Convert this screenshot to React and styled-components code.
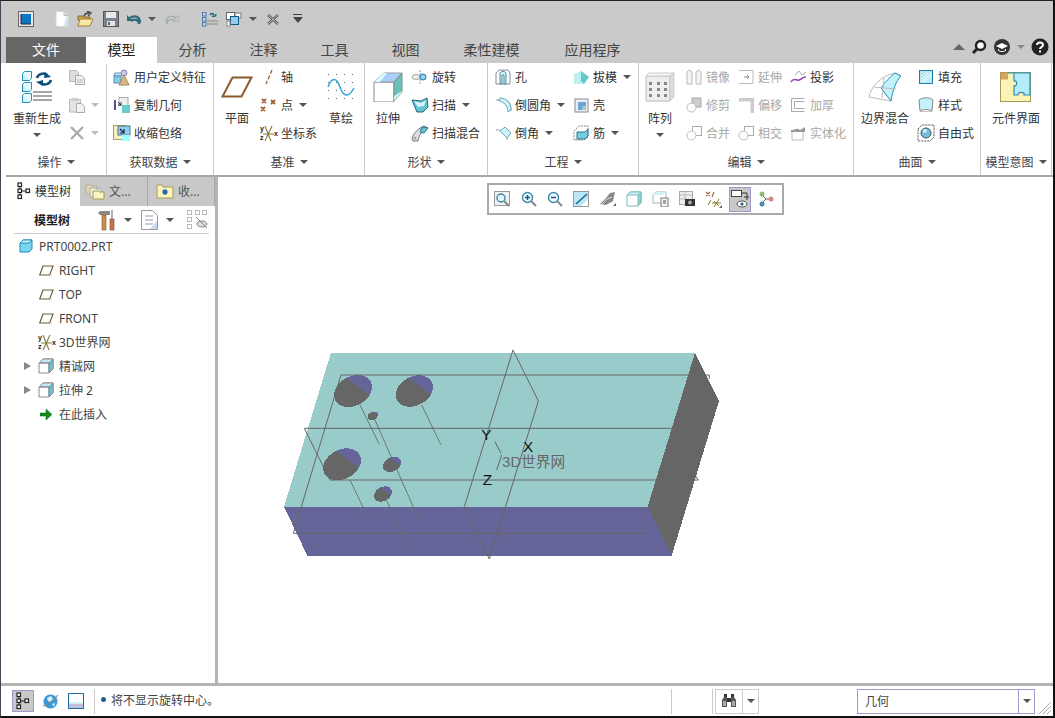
import React from "react";
import styled, { createGlobalStyle } from "styled-components";

const Global = createGlobalStyle`
  html, body { margin: 0; padding: 0; background: #fff; }
  * { box-sizing: border-box; }
  body { font-family: "Noto Sans", "Noto Sans CJK SC", sans-serif; font-size: 12px; color: #333; }
`;
const Frame = styled.div`
  width: 1055px; height: 718px; display: flex; flex-direction: column; background: #fff;
  border-top: 1px solid #222; border-left: 1px solid #445; border-right: 2px solid #111; border-bottom: 2px solid #111;
  overflow: hidden;
`;
const TitleBar = styled.div`height: 36px; background: #cacaca; display: flex; align-items: center; padding-left: 17px;`;
const Quick = styled.span`display: flex; margin-left: ${p => p.$gap ?? 0}px;`;
const TabBar = styled.div`height: 26px; background: #cacaca; display: flex; padding-left: 5px; align-items: stretch;`;
const FileTab = styled.div`width: 80px; background: #666; color: #fff; font-size: 14px; display: flex; align-items: center; justify-content: center; padding-bottom: 3px;`;
const Tab = styled.div`
  padding: 0 ${p => p.$pad ?? 21.5}px 3px; font-size: 14px; display: flex; align-items: center; color: ${p => (p.$active ? "#222" : "#444")};
  background: ${p => (p.$active ? "#fff" : "transparent")}; height: ${p => (p.$active ? 27 : 26)}px; z-index: 1;
`;
const TabTools = styled.div`margin-left: auto; display: flex; align-items: center; gap: 6px; padding: 0 4px 6px 0;`;
const Ribbon = styled.div`height: 112px; display: flex; padding-left: 5px; background: #fff;`;
const Group = styled.div`width: ${p => p.$w}px; border-right: 1px solid #c8c8c8; display: flex; flex-direction: column;`;
const GroupBody = styled.div`height: 84px; flex: none; display: flex; padding-left: ${p => p.$pad ?? 0}px;`;
const GroupLabel = styled.div`flex: 1; display: flex; align-items: center; justify-content: center; gap: 5px; color: #444; padding-top: 2px;`;
const Large = styled.div`
  width: ${p => p.$w}px; margin-right: ${p => p.$mr ?? 0}px; display: flex; flex-direction: column; align-items: center; padding-top: 5px; flex: none;
  color: #333;
`;
const LargeIcon = styled.div`height: 38px; flex: none; display: flex; align-items: center; justify-content: center;`;
const LargeText = styled.div`height: 16px; line-height: 16px; margin-top: 5px; white-space: nowrap; flex: none;`;
const LargeCaret = styled.div`margin-top: 6px; height: 4px; display: flex; flex: none;`;
const Stack = styled.div`width: ${p => p.$w}px; flex: none; display: grid; grid-auto-rows: 28px;`;
const Item = styled.div`
  display: flex; align-items: center; gap: 3px; white-space: nowrap; color: ${p => (p.$off ? "#a8a8a8" : "#333")};
`;
const ItemIcon = styled.span`width: 18px; height: 18px; display: flex; align-items: center; justify-content: center; flex: none;`;
const Caret = styled.span`
  display: inline-block; width: 0; height: 0; flex: none; margin-left: ${p => p.$ml ?? 0}px;
  border-left: 4px solid transparent; border-right: 4px solid transparent; border-top: 4px solid ${p => p.$c ?? "#555"};
`;
const Main = styled.div`height: 508px; display: flex; border-top: 2px solid #a8a8a8; margin-left: 5px;`;
const Panel = styled.div`width: 209px; flex: none; display: flex; flex-direction: column;`;
const Sash = styled.div`width: 3px; background: #b4b4b4; flex: none;`;
const PanelTabs = styled.div`height: 29px; display: flex; background: #fff; flex: none;`;
const PanelTab = styled.div`
  width: ${p => p.$w}px; display: flex; align-items: center; gap: 4px; padding: 0 0 1px ${p => p.$pl ?? 8}px; color: ${p => (p.$active ? "#333" : "#555")};
  background: ${p => (p.$active ? "#fff" : "#c8c8c8")};
  border-right: 1px solid ${p => (p.$active ? "#c8c8c8" : "#a8a8a8")};
`;
const TreeBar = styled.div`
  height: 28px; margin: 0 6px 0 8px; border-bottom: 1px solid #ccc; display: flex; align-items: center; padding-left: 20px; flex: none;
`;
const TreeBarTitle = styled.b`width: 63px; font-weight: 700; color: #222;`;
const TreeTool = styled.span`display: flex; align-items: center; margin-right: ${p => p.$mr ?? 0}px;`;
const Tree = styled.div`display: flex; flex-direction: column;`;
const TreeRow = styled.div`height: 24px; display: flex; align-items: center; padding-left: ${p => p.$pl}px; color: #444; white-space: nowrap;`;
const Expand = styled.span`
  width: 0; height: 0; margin-right: 7px; flex: none;
  border-top: 4.5px solid transparent; border-bottom: 4.5px solid transparent; border-left: 7px solid #888;
`;
const TreeIcon = styled.span`width: ${p => p.$w ?? 16}px; display: flex; justify-content: center; margin-right: ${p => p.$mr ?? 5}px; flex: none;`;
const Canvas = styled.div`flex: 1; display: flex; flex-direction: column; align-items: flex-start; padding-left: 57px; background: #fff;`;
const Float = styled.div`
  margin: 6px 0 0 212px; width: 297px; height: 32px; border: 2px solid #aaa; background: #fff; display: flex; align-items: center; flex: none;
`;
const FloatBtn = styled.span`
  width: ${p => (p.$on ? 22 : 26.4)}px; height: ${p => (p.$on ? 25 : 24)}px; margin: 0 ${p => (p.$on ? 2.2 : 0)}px; display: flex; align-items: center; justify-content: center; flex: none;
  ${p => p.$on && "background:#c8c8c8; outline: 1px solid #9c9ccc; outline-offset: -1px;"}
`;
const Model = styled.svg`display: block; margin-top: 125px; flex: none;`;
const Status = styled.div`flex: 1; border-top: 3px solid #b4b4b4; display: flex; align-items: center; padding-left: 11px; background: #fff; position: relative;`;
const StatusBtn = styled.span`
  width: 22px; height: 22px; display: flex; align-items: center; justify-content: center; margin-right: ${p => p.$mr ?? 4}px; flex: none;
  ${p => p.$on && "background:#c8c8c8; border: 1px solid #9c9ccc;"}
`;
const VSep = styled.span`width: 1px; height: ${p => p.$h ?? 25}px; background: #ccc; flex: none; margin-left: ${p => p.$ml ?? 0}px;`;
const Msg = styled.div`display: flex; align-items: center; gap: 5px; margin-left: 6px; width: 570px; color: #444; flex: none; padding-bottom: 2px;`;
const Dot = styled.span`width: 5px; height: 5px; border-radius: 50%; background: #1f5f8f; flex: none; margin-top: -1px;`;
const Binocs = styled.div`
  width: 44px; height: 25px; margin-left: 2px; border: 1px solid #ccc; display: flex; align-items: center; flex: none;
`;
const BinoIcon = styled.span`width: 27px; display: flex; justify-content: center; border-right: 1px solid #ccc; height: 23px; align-items: center;`;
const Combo = styled.div`
  width: 178px; height: 25px; margin-left: 98px; border: 1px solid #9c9ccc; display: flex; align-items: center; flex: none; padding-left: 7px; color: #444;
`;
const ComboArrow = styled.span`margin-left: auto; width: 16px; height: 23px; border-left: 1px solid #9c9ccc; display: flex; align-items: center; justify-content: center;`;
const Grip = styled.svg`position: absolute; right: 1px; bottom: 1px;`;

const IconSvg = styled.svg`display: block; flex: none;`;
const S = ({ w = 16, h = 16, children }) => (
  <IconSvg width={w} height={h} viewBox={`0 0 ${w} ${h}`}>{children}</IconSvg>
);

/* quick access */
const AppIcon = () => <S w={16} h={16}><rect x=".5" y=".5" width="15" height="15" fill="#e8e8e8" stroke="#666" /><rect x="3" y="3" width="10" height="10" fill="#0d77c4" /><path d="M3 3v10h10" fill="none" stroke="#223" /></S>;
const NewIcon = () => <S w={14} h={16}><path d="M1 .5h8l4 4v11H1z" fill="#fff" stroke="#d5d5d5" /><path d="M9 .5v4h4" fill="#dde" stroke="#bbb" /><path d="M11 6h2v9h-4z" fill="#cfe4f4" /></S>;
const OpenIcon = () => <S w={17} h={16}><path d="M1 5h5l1 1h6v3H1z" fill="#c9a24a" stroke="#8a6a2a" /><path d="M1 15l2-7h13l-3 7z" fill="#f7e6a8" stroke="#a2822f" /><path d="M7 5c1-3 3-3 5-3M10 0l4 2-3 3" fill="none" stroke="#444" strokeWidth="1.4" /></S>;
const SaveIcon = () => <S w={16} h={16}><rect x=".5" y=".5" width="15" height="15" fill="#7c8288" stroke="#555" /><rect x="3" y="1" width="10" height="6" fill="#e8e8e8" /><rect x="4" y="10" width="8" height="5" fill="#dfe6ee" /><rect x="5" y="11" width="2" height="3" fill="#567" /></S>;
const UndoIcon = ({ c = "#2b6a76" }) => <S w={16} h={12}><path d="M4 5c4-3 9-2 10 3l-1 3c0-4-4-6-8-3" fill="none" stroke={c} strokeWidth="2.2" /><path d="M1 2v6h6z" fill={c} /></S>;
const RedoIcon = () => <S w={16} h={12}><g transform="matrix(-1 0 0 1 16 0)"><path d="M4 5c4-3 9-2 10 3l-1 3c0-4-4-6-8-3" fill="none" stroke="#a8b0b0" strokeWidth="1.6" /><path d="M1 2v6h6z" fill="none" stroke="#a8b0b0" /></g></S>;
const RegenSmall = () => <S w={16} h={15}>{[0, 5, 10].map(y => <rect key={y} x=".5" y={y + .5} width="3.5" height="3.5" fill="#bde" stroke="#57a" />)}<path d="M8 3c1-2 3-2 4 0M14 2c0 2-2 3-4 2" fill="none" stroke="#15608c" strokeWidth="1.4" /><path d="M5 9h11M5 12h11" stroke="#888" /></S>;
const WindowsIcon = () => <S w={16} h={15}><rect x=".5" y=".5" width="8" height="7" fill="#fff" stroke="#666" /><rect x="9" y="1" width="6" height="5" fill="#fff" stroke="#777" /><rect x="4.5" y="4.5" width="8" height="8" fill="#9cc8e8" stroke="#0d5d88" /><rect x="1" y="9" width="3" height="5" fill="#fff" stroke="#888" /></S>;
const CloseSmall = () => <S w={12} h={11}><path d="M1 1l10 9M11 1L1 10" stroke="#555" strokeWidth="2.4" /><path d="M1 1l10 9M11 1L1 10" stroke="#ddd" strokeWidth=".8" /></S>;
const More = () => <S w={10} h={10}><path d="M0 .5h9" stroke="#444" /><path d="M0 3h10L5 9z" fill="#444" /></S>;

/* tab tools */
const SearchI = () => <S w={16} h={16}><circle cx="9.5" cy="6.5" r="4.5" fill="#fff" stroke="#222" strokeWidth="2.4" /><path d="M6 10l-4 4" stroke="#222" strokeWidth="3" /></S>;
const HatI = () => <S w={18} h={16}><circle cx="9" cy="8" r="8" fill="#333" /><path d="M3 7l6-3 6 3-6 3z" fill="#fff" /><path d="M5.500 10v1.500c2 1.500 5 1.500 7 0V10" fill="none" stroke="#fff" /></S>;
const HelpI = () => <S w={18} h={18}><circle cx="9" cy="9" r="8.500" fill="#222" /><path d="M6 7c0-3.500 6-3.500 6 0 0 2-3 2-3 4" fill="none" stroke="#fff" strokeWidth="2" /><rect x="8" y="12.500" width="2" height="2" fill="#fff" /></S>;

/* ribbon */
const Cube = ({ w = 16, h = 16, s = "#778" }) => (
  <S w={w} h={h}><g transform={`scale(${w / 16} ${h / 16})`}>
    <path d="M1 5l4-4h10v10l-4 4H1z" fill="#fff" stroke={s} />
    <path d="M1 5l4-4h10l-4 4z" fill="#bfeff5" stroke={s} />
    <path d="M11 5l4-4v10l-4 4z" fill="#66c6c6" stroke={s} />
    <path d="M1 5h10v10" fill="none" stroke={s} />
  </g></S>
);
const RegenLarge = () => <S w={30} h={32}>
  {[0, 11, 22].map(y => <g key={y}><rect x=".5" y={y + 2.500} width="7" height="7" fill="#c7f2fa" stroke="#2a8fb5" /><path d={`M.5 ${y + 2.500}l2-2h7v7l-2 2`} fill="#e6fbff" stroke="#2a8fb5" /></g>)}
  <path d="M15 7c1-4 7-6 10-3M29 9c-1 4-7 6-10 3" fill="none" stroke="#0d4f7c" strokeWidth="2.600" />
  <path d="M23 1l6 5-7 1zM21 15l-7-4 7-2z" fill="#0d4f7c" />
  <path d="M11 21h19M11 25h19M11 29h19" stroke="#8a8a8a" strokeWidth="1.400" />
</S>;
const CopyI = () => <S w={16} h={15}><path d="M.5.5h7l2 2v9H.5z" fill="#ddd" stroke="#bbb" /><path d="M6.500 5.500h6l3 3v6h-9z" fill="#eee" stroke="#aaa" /><path d="M8 10h6M8 12h6" stroke="#bbb" /></S>;
const PasteI = () => <S w={16} h={16}><rect x=".5" y="2.500" width="11" height="12.500" fill="#e4e4e4" stroke="#bbb" /><rect x="3" y="1" width="6" height="3" fill="#ccc" /><path d="M7.500 6.500h5l3 3v6h-8z" fill="#f2f2f2" stroke="#aaa" /></S>;
const XI = () => <S w={14} h={14}><path d="M1 1l12 12M13 1L1 13" stroke="#aaa" strokeWidth="2.400" /></S>;
const UdfI = () => <S w={18} h={17}><path d="M1 7h7l1-3h-7z" fill="#bfeff5" stroke="#68b" /><rect x="1" y="7" width="7" height="7" fill="#7fd0d8" stroke="#68b" /><circle cx="11" cy="4" r="3" fill="#c8c8e8" stroke="#8888b8" /><path d="M11 6l5 10H6z" fill="#d8b88a" stroke="#a88858" /></S>;
const CopyGeomI = () => <S w={18} h={17}><rect x="6" y="0.500" width="9" height="8" fill="#eee" stroke="#aaa" /><rect x="1" y="3" width="2" height="10" fill="#55558a" /><rect x="9" y="8" width="8" height="8" fill="#66cccc" /><path d="M5 5l3 3M8 5v3H5" fill="none" stroke="#333" /></S>;
const ShrinkI = () => <S w={18} h={17}><rect x=".5" y=".5" width="12" height="14" fill="#f7f0bc" stroke="#a8a060" /><rect x="5" y="1" width="12" height="9" fill="#8fd0ee" stroke="#578" /><rect x="9" y="10" width="8" height="6" fill="#99ffff" /><path d="M7 4l4 4M11 4v4H7" fill="none" stroke="#224" strokeWidth="1.200" /></S>;
const PlaneLarge = () => <S w={32} h={22}><path d="M1.500 20.500L11.500 1.500H30.500L20.500 20.500z" fill="#fff" stroke="#8c5a2b" strokeWidth="2" /></S>;
const AxisI = () => <S w={12} h={16}><path d="M9 1l-6 14" stroke="#8c5a2b" strokeWidth="1.200" strokeDasharray="4 2" /></S>;
const PointI = () => <S w={18} h={14}><g stroke="#a0603a" strokeWidth="1.800"><path d="M2 1l4 4M6 1L2 5M11 2l4 4M15 2l-4 4M1 9l4 4M5 9l-4 4" /></g></S>;
const CsysI = () => <S w={18} h={17}><path d="M5 1l6 15M12 1L5 16M3 9h11" stroke="#8a7a3a" strokeWidth="1.100" /><text x="0" y="6" fontSize="7" fontWeight="700" fontFamily="Liberation Sans" fill="#222">y</text><text x="0" y="15" fontSize="7" fontWeight="700" fontFamily="Liberation Sans" fill="#222">z</text><text x="14" y="11" fontSize="7" fontWeight="700" fontFamily="Liberation Sans" fill="#222">x</text></S>;
const SketchLarge = () => <S w={28} h={28}>
  {[1, 9, 17, 25].flatMap(x => [1, 9, 17, 25].map(y => <rect key={x + "-" + y} x={x} y={y} width="1" height="1" fill="#666" />))}
  <path d="M1 14C5 3 10 5 13 14s8 12 14 1" fill="none" stroke="#35a8d8" strokeWidth="1.500" />
</S>;
const ExtrudeLarge = () => <S w={30} h={30}>
  <path d="M1 10h20v20H1z" fill="#fff" stroke="#888" />
  <path d="M1 10L11 1h18L21 10z" fill="#a8d0f8" stroke="#999" />
  <path d="M1 10L11 1h3L7 10z" fill="#d8ffff" />
  <path d="M21 10l8-9v19l-8 9z" fill="#66c4bc" stroke="#888" />
  <path d="M21 24l8-5v1l-8 9z" fill="#c8f0e8" />
</S>;
const RevolveI = () => <S w={18} h={14}><path d="M9 0v14" stroke="#999" strokeDasharray="2 1" /><ellipse cx="5" cy="7" rx="4" ry="2.500" fill="#eee" stroke="#aaa" /><circle cx="12" cy="7" r="3" fill="#8fd8ee" stroke="#1a76a8" /></S>;
const SweepI = () => <S w={18} h={16}><path d="M1 3l9 1 6-3 1 9-5 5H6z" fill="#66c4d0" stroke="#186a88" /><path d="M3 4l7 2 5-3-2 6-6 1z" fill="#d8f4f8" /></S>;
const BlendI = () => <S w={18} h={17}><path d="M1 14C2 8 8 3 13 1l4 2c-5 2-9 6-10 13H2z" fill="#dde" stroke="#777" /><path d="M11 2l6 1-4 5-4-1z" fill="#66c4d0" stroke="#2a7a90" /><circle cx="4" cy="13" r="1.500" fill="#aaa" /></S>;
const HoleI = () => <S w={16} h={16}><path d="M1 4l3-3h9l2 3v11H1z" fill="#fff" stroke="#889" /><path d="M5 4c1-2 5-2 6 0v11H9V6H7v9H5z" fill="#d8f4f8" stroke="#489" /></S>;
const DraftI = () => <S w={17} h={15}><path d="M1 4l7-3 8 6-5 7H1z" fill="#bff0f0" /><path d="M8 1l8 6-5 7-3-3z" fill="#66c8c8" /></S>;
const RoundI = () => <S w={17} h={16}><path d="M1 3h8c4 0 7 3 7 11" fill="none" stroke="#99a" /><path d="M5 1c6 0 11 4 11 12l-3 2C13 9 9 5 4 4z" fill="#d0f2f8" stroke="#6ab" /></S>;
const ShellI = () => <S w={15} h={15}><rect x="1" y="1" width="13" height="13" fill="#eee" stroke="#889" /><rect x="4" y="4" width="8" height="8" fill="#6aa4dc" /><rect x="8" y="8" width="4" height="4" fill="#9cc" /></S>;
const ChamferI = () => <S w={17} h={15}><path d="M1 4h4M12 9v5" stroke="#99a" fill="none" /><path d="M5 5l5-4 6 6-4 5z" fill="#d0f2f8" stroke="#6ab" /></S>;
const RibI = () => <S w={16} h={16}><path d="M1 6l5-5h9v11l-4 3H1z" fill="#fff" stroke="#888" strokeDasharray="2 1" /><path d="M4 7h8l3-3v7l-3 3H4z" fill="#77ccdd" stroke="#278" /></S>;
const PatternLarge = () => <S w={30} h={30}>
  <path d="M1 4h24v25H1z" fill="#eee" stroke="#bbb" />
  <path d="M1 4l3-3h25l-4 3z" fill="#f6f6f6" stroke="#ccc" />
  <path d="M25 4l4-3v24l-4 4z" fill="#ddd" stroke="#ccc" />
  {[4, 12, 19].flatMap(x => [10, 16, 22].map(y => <rect key={x + "-" + y} x={x} y={y} width="3" height="3" fill="#888" />))}
</S>;
const MirrorI = () => <S w={16} h={16}><path d="M1 3l2-2 3 2v12H1zM15 3l-2-2-3 2v12h5z" fill="#f4f4f4" stroke="#bbb" /></S>;
const ExtendI = () => <S w={16} h={14}><path d="M1 .5h14v13H1" fill="none" stroke="#bbb" /><path d="M6 7h5M9 5l2 2-2 2" fill="none" stroke="#888" /></S>;
const ProjectI = () => <S w={17} h={14}><path d="M5 5l4-4 3 4 4-3" fill="none" stroke="#aaa" /><path d="M1 12c3-5 5-1 8-2s3-3 7-3" fill="none" stroke="#8844bb" strokeWidth="1.500" /></S>;
const TrimI = () => <S w={16} h={16}><rect x="6" y="1" width="9" height="9" fill="#ccc" stroke="#aaa" /><circle cx="5.500" cy="10.500" r="4.500" fill="#fff" stroke="#bbb" /></S>;
const OffsetI = () => <S w={16} h={16}><path d="M1 4h10M13 4v11" fill="none" stroke="#bbb" strokeDasharray="2 1" /><path d="M1 1h15v15h-3V4H1z" fill="#ccc" /></S>;
const ThickenI = () => <S w={14} h={14}><path d="M.5.5h13M.5.5v13h13M3.500 3.500h10M3.500 3.500v7h10" fill="none" stroke="#aaa" /></S>;
const MergeI = () => <S w={16} h={16}><rect x="6.500" y="1.500" width="9" height="9" fill="#fff" stroke="#aaa" /><circle cx="5.500" cy="10.500" r="4.500" fill="#fff" stroke="#bbb" /></S>;
const SolidifyI = () => <S w={16} h={15}><path d="M1 4c4 0 5-3 9 0l5-3v5H1z" fill="#999" /><path d="M2 6v8h11V6" fill="none" stroke="#bbb" /></S>;
const BoundaryLarge = () => <S w={34} h={30}>
  <path d="M1 25C3 15 12 4 27 1l6 3c-6 5-9 13-10 25z" fill="#fff" stroke="#bbb" />
  <path d="M13 16c4-6 9-11 14-15l6 3c-5 5-8 13-10 25z" fill="#c3f2fa" stroke="#2a8fb5" />
  <path d="M6 15l22 2M16 6l-2 20" fill="none" stroke="#bbb" />
</S>;
const FillI = () => <S w={14} h={14}><rect x=".5" y=".5" width="13" height="13" fill="#bce8f4" stroke="#1e7ca6" /><path d="M3 12L12 3M6 12l6-6M3 9l6-6" stroke="#fff" /></S>;
const StyleI = () => <S w={16} h={16}><path d="M1 3c4-3 10-3 14 0l-1 11H2z" fill="#c3f2fa" stroke="#888" /><path d="M2 14c3-2 9-2 12 0" fill="#fff" stroke="#888" /></S>;
const FreeI = () => <S w={18} h={18}><path d="M1 5l4-4h12v12l-4 4H1z" fill="#fff" stroke="#555" strokeDasharray="2 1" /><circle cx="9" cy="9" r="5" fill="#78bcdc" stroke="#456" /><circle cx="8" cy="7" r="2" fill="#cfeef8" /></S>;
const PuzzleLarge = () => <S w={32} h={31}>
  <rect x=".5" y=".5" width="30" height="29" fill="#fbf3b5" stroke="#a89a55" />
  <path d="M8 1h22v22H24c2-3-7-4-6 0h-4V14c3 1 4-6 0-5V1z" fill="#b4ecfa" stroke="#2a90b8" strokeWidth="1.200" />
  <rect x=".5" y=".5" width="7.500" height="7" fill="#c8924a" opacity=".8" />
</S>;

/* tree */
const TreeCube = () => <S w={14} h={14}><path d="M1 4l3-3h9v9l-3 3H1z" fill="#7ad6f0" stroke="#1e8bb8" /><path d="M1 4l3-3h9l-3 3z" fill="#d4f6ff" stroke="#1e8bb8" /></S>;
const PlaneSmall = () => <S w={15} h={11}><path d="M.7 10L4 1h10l-3.300 9z" fill="#fff" stroke="#6d6238" strokeWidth="1.200" /></S>;
const ModelTreeI = () => <S w={14} h={18}><g fill="#fff" stroke="#222" strokeWidth="1.200"><rect x="1" y="1" width="3.500" height="3.500" /><rect x="1" y="7" width="3.500" height="3.500" /><rect x="9" y="7" width="3.500" height="3.500" /><rect x="1" y="13" width="3.500" height="3.500" /></g><path d="M3 5v2M3 11v2M5 9h4" stroke="#222" /></S>;
const FolderStack = () => <S w={20} h={18}><path d="M1 3h5l1 1h5v8H1z" fill="#e8d8a0" stroke="#aaa" /><path d="M5 6h5l1 1h5v8H5z" fill="#eed" stroke="#aaa" /><path d="M8 9h5l1 1h5v7H8z" fill="#fbf3c0" stroke="#a89a55" /></S>;
const FavFolder = () => <S w={18} h={15}><path d="M1 3V1h5l1 2h10v11H1z" fill="#fbf3c0" stroke="#a89a55" /><path d="M9 5v6M6 8h6M7 6l4 4M11 6l-4 4" stroke="#1a5aa8" strokeWidth="1.100" /></S>;
const HammerI = () => <S w={19} h={22}><path d="M1 4l2-2h10v4H3z" fill="#8a8a8a" /><rect x="5" y="6" width="4" height="15" fill="#c98d55" stroke="#8a5a2b" strokeWidth=".6" /><rect x="14" y="1" width="2" height="9" fill="#a8b4c0" /><rect x="13" y="10" width="4" height="11" fill="#c0784a" stroke="#844" strokeWidth=".6" /></S>;
const ListI = () => <S w={17} h={20}><path d="M.5.500h11l5 5v14H.5z" fill="#fff" stroke="#999" /><path d="M4 6h8M4 10h8M4 14h8" stroke="#99a" /><path d="M9 19l7-8v8z" fill="#c8d8f0" /></S>;
const TreeDisabled = () => <S w={21} h={20}><g fill="#fff" stroke="#bbb"><rect x=".5" y=".5" width="4" height="4" /><rect x=".5" y="7.500" width="4" height="4" /><rect x=".5" y="14.500" width="4" height="4" /><rect x="8.500" y=".5" width="4" height="4" /><rect x="15.500" y=".5" width="4" height="4" /></g><ellipse cx="15" cy="14" rx="5" ry="3" fill="#ddd" stroke="#888" /><path d="M9 7l11 11" stroke="#888" /></S>;
const ArrowI = () => <S w={12} h={11}><path d="M0 4h6V0l6 5.500L6 11V7H0z" fill="#168a16" stroke="#063" strokeWidth=".5" /></S>;

/* view toolbar */
const V = {
  Refit: () => <S w={16} h={16}><rect x=".5" y=".5" width="15" height="14" fill="#f0f0f0" stroke="#999" /><circle cx="7" cy="7" r="4" fill="#e8f6ff" stroke="#3a8aa8" strokeWidth="1.400" /><path d="M10 10l5 5" stroke="#888" strokeWidth="2" /></S>,
  In: () => <S w={16} h={16}><circle cx="6.500" cy="6.500" r="5" fill="#f0faff" stroke="#3a8aa8" strokeWidth="1.400" /><path d="M4 6.500h5M6.500 4v5" stroke="#0d5d88" strokeWidth="1.500" /><path d="M10 10l5 5" stroke="#888" strokeWidth="2" /></S>,
  Out: () => <S w={16} h={16}><circle cx="6.500" cy="6.500" r="5" fill="#f0faff" stroke="#3a8aa8" strokeWidth="1.400" /><path d="M4 6.500h5" stroke="#0d5d88" strokeWidth="1.500" /><path d="M10 10l5 5" stroke="#888" strokeWidth="2" /></S>,
  Repaint: () => <S w={16} h={16}><rect x=".5" y=".5" width="15" height="15" fill="#bfe6f4" stroke="#999" /><path d="M3 13L14 3" stroke="#0d6d98" strokeWidth="1.600" /><path d="M8 15l7-7v7z" fill="#fff" /></S>,
  Display: () => <S w={17} h={16}><path d="M1 13l6-6 4-5 5-1-2 9-7 4z" fill="#888" /><path d="M3 13l5-5 5-2" stroke="#ddd" fill="none" /><path d="M14 15h3v-3z" fill="#666" /></S>,
  Cube: () => <S w={17} h={16}><path d="M1 4l3-3h11v11l-3 3H1z" fill="#fff" stroke="#7bb" /><path d="M1 4l3-3h11l-3 3z" fill="#cff4f8" stroke="#7bb" /><path d="M12 4l3-3v11l-3 3z" fill="#8cd4d4" stroke="#7bb" /></S>,
  Views: () => <S w={17} h={16}><path d="M1 4l3-3h10v11H1z" fill="#fff" stroke="#9bb" /><path d="M1 4l3-3h10l-3 3z" fill="#cff4f8" /><rect x="9" y="7" width="7" height="9" fill="#f4f4f4" stroke="#777" /><path d="M11 10h3M11 12h3" stroke="#555" /></S>,
  Shot: () => <S w={16} h={16}><rect x=".5" y=".5" width="13" height="13" fill="#eee" stroke="#aaa" /><path d="M1 4h12M1 8h7M6 1v8" stroke="#bbb" /><rect x="6" y="8" width="10" height="7" fill="#333" /><circle cx="11" cy="11.500" r="2" fill="#aaa" /></S>,
  Datum: () => <S w={17} h={17}><path d="M1 1l4 4M5 1L1 5M9 1L7 6" stroke="#a5673f" strokeWidth="1.200" /><path d="M3 14l3-5M9 10l5 5M14 8l-5 8M7 12h9" stroke="#8c7a2a" /><path d="M14 17h3v-3z" fill="#666" /></S>,
  Hide: () => <S w={18} h={18}><rect x=".5" y=".5" width="10" height="6" fill="#fff" stroke="#444" /><path d="M11 3h5v7M13 7h6" fill="none" stroke="#333" /><ellipse cx="11" cy="14" rx="5" ry="3" fill="#fff" stroke="#555" /><circle cx="11" cy="14" r="1.600" fill="#186a88" /></S>,
  Tree: () => <S w={16} h={16}><path d="M3 3l5 5-5 5M8 8h5" stroke="#666" fill="none" /><circle cx="4" cy="3" r="2.500" fill="#8cb878" /><circle cx="4" cy="13" r="2.500" fill="#4a8ab8" /><circle cx="13" cy="8" r="2.500" fill="#d88888" /></S>,
};
/* status bar */
const GlobeI = () => <S w={17} h={17}><circle cx="8.500" cy="8.500" r="7" fill="#3a9ad8" /><path d="M5 5l4-2 2 3-3 3-2-1zM10 11l3-1-1 4z" fill="#d8f0fb" /><path d="M1 13C6 12 13 6 16 2" fill="none" stroke="#888" strokeWidth="1.200" /></S>;
const WinI = () => <S w={16} h={16}><rect x=".5" y=".5" width="15" height="15" fill="#fff" stroke="#1e6ea0" /><rect x="1" y="9" width="14" height="2" fill="#cfeff8" /><rect x="1" y="11" width="14" height="4" fill="#c0c0dc" /></S>;
const BinoI = () => <S w={16} h={14}><rect x="3" y="0" width="3" height="3" fill="#333" /><rect x="10" y="0" width="3" height="3" fill="#333" /><path d="M1 13V6l2-3h3v10zM15 13V6l-2-3h-3v10z" fill="#555" /><rect x="6" y="4" width="4" height="4" fill="#333" /><rect x="2" y="7" width="3" height="5" fill="#aaa" /><rect x="11" y="7" width="3" height="5" fill="#aaa" /></S>;

/* model in zoom units (3 per px) */
const axes = [[255, 195, 313, 313], [300, 240, 430, 535], [440, 195, 497, 313], [225, 420, 280, 535], [335, 483, 403, 622]];
const holes = [
  { id: "a", cx: 234, cy: 153, w: 113, line: [236, 108, 268, 180] },
  { id: "b", cx: 418, cy: 153, w: 111, line: [420, 108, 452, 175] },
  { id: "c", cx: 293, cy: 228, w: 31, line: [297, 216, 307, 232] },
  { id: "d", cx: 201, cy: 373, w: 113, line: [205, 330, 237, 398] },
  { id: "e", cx: 351, cy: 373, w: 54, line: [352, 352, 370, 385] },
  { id: "f", cx: 324, cy: 462, w: 54, line: [325, 442, 342, 475] },
];
const Hole = ({ id, cx, cy, w, line }) => {
  const [x1, y1, x2, y2] = line;
  const dx = (x2 - x1) * 3, dy = (y2 - y1) * 3;
  const clip = `${x1 - dx},${y1 - dy} ${x2 + dx},${y2 + dy} ${x2 + dx + 300},${y2 + dy} ${x1 - dx + 300},${y1 - dy}`;
  const props = { cx, cy, rx: w * 0.53, ry: w * 0.39, transform: `rotate(-28 ${cx} ${cy})` };
  return (
    <g>
      <clipPath id={id}><polygon points={clip} /></clipPath>
      <ellipse {...props} fill="#666" />
      <ellipse {...props} fill="#65659a" clipPath={`url(#${id})`} />
    </g>
  );
};
const ModelDrawing = () => (
  <Model width="450" height="225" viewBox="0 0 1350 675" shapeRendering="crispEdges">
    <polygon points="168,38 1260,38 1118,500 27,500" fill="#9acbcb" />
    <polygon points="27,500 1118,500 1190,647 97,647" fill="#65659a" />
    <polygon points="1260,38 1332,183 1190,647 1118,500" fill="#666" />
    {holes.map(h => <Hole key={h.id} {...h} />)}
    <g fill="none" stroke="#666" strokeWidth="3" shapeRendering="auto">
      <path d="M1303 116V105H198L55 580H1118" />
      <path d="M165 420L88 265H1190M165 420H1270L1262 408" />
      <path d="M714 30L790 183L643 657L568 500z" />
      {axes.map(a => <path key={a[0]} d={`M${a[0]} ${a[1]}L${a[2]} ${a[3]}`} strokeDasharray="6 1" />)}
      <path d="M660 305L678 340M680 345L665 390" />
    </g>
    <g shapeRendering="auto" fontFamily="Liberation Sans, sans-serif">
      <text x="619" y="301" fontSize="46" fill="#111">Y</text>
      <text x="744" y="337" fontSize="46" fill="#111">X</text>
      <text x="623" y="434" fontSize="46" fill="#111">Z</text>
      <text x="682" y="382" fontSize="44" fill="#666" fontFamily="Liberation Sans, Noto Sans CJK SC, sans-serif">3D世界网</text>
    </g>
  </Model>
);

const Tool = ({ icon, children, caret, off, ml = 6 }) => (
  <Item $off={off}><ItemIcon>{icon}</ItemIcon>{children}{caret && <Caret $ml={ml - 3} $c={off ? "#bbb" : "#555"} />}</Item>
);
const Big = ({ w, mr, icon, text, caret }) => (
  <Large $w={w} $mr={mr}>
    <LargeIcon>{icon}</LargeIcon>
    <LargeText>{text}</LargeText>
    {caret && <LargeCaret><Caret /></LargeCaret>}
  </Large>
);
const GroupFoot = ({ children }) => <GroupLabel>{children}<Caret /></GroupLabel>;

export default function App() {
  return (
    <Frame>
      <Global />
      <TitleBar>
        <AppIcon />
        <Quick $gap={21}><NewIcon /></Quick>
        <Quick $gap={8}><OpenIcon /></Quick>
        <Quick $gap={9}><SaveIcon /></Quick>
        <Quick $gap={7}><UndoIcon /></Quick>
        <Quick $gap={6}><Caret /></Quick>
        <Quick $gap={8}><RedoIcon /></Quick>
        <Quick $gap={22}><RegenSmall /></Quick>
        <Quick $gap={8}><WindowsIcon /></Quick>
        <Quick $gap={7}><Caret /></Quick>
        <Quick $gap={10}><CloseSmall /></Quick>
        <Quick $gap={14}><More /></Quick>
      </TitleBar>
      <TabBar>
        <FileTab>文件</FileTab>
        <Tab $active>模型</Tab>
        <Tab>分析</Tab>
        <Tab>注释</Tab>
        <Tab>工具</Tab>
        <Tab>视图</Tab>
        <Tab $pad={22.5}>柔性建模</Tab>
        <Tab $pad={22.5}>应用程序</Tab>
        <TabTools>
          <S w={12} h={8}><path d="M0 7l6-6 6 6z" fill="#666" /></S>
          <SearchI />
          <HatI />
          <Caret $c="#888" />
          <HelpI />
        </TabTools>
      </TabBar>
      <Ribbon>
        <Group $w={101}>
          <GroupBody>
            <Big w={62} icon={<RegenLarge />} text="重新生成" caret />
            <Stack $w={38}>
              <Tool off icon={<CopyI />} />
              <Tool off icon={<PasteI />} caret ml={5} />
              <Tool off icon={<XI />} caret ml={5} />
            </Stack>
          </GroupBody>
          <GroupFoot>操作</GroupFoot>
        </Group>
        <Group $w={107}>
          <GroupBody $pad={6}>
            <Stack $w={100}>
              <Tool icon={<UdfI />}>用户定义特征</Tool>
              <Tool icon={<CopyGeomI />}>复制几何</Tool>
              <Tool icon={<ShrinkI />}>收缩包络</Tool>
            </Stack>
          </GroupBody>
          <GroupFoot>获取数据</GroupFoot>
        </Group>
        <Group $w={151}>
          <GroupBody>
            <Big w={46} icon={<PlaneLarge />} text="平面" />
            <Stack $w={61}>
              <Tool icon={<AxisI />}>轴</Tool>
              <Tool icon={<PointI />} caret>点</Tool>
              <Tool icon={<CsysI />}>坐标系</Tool>
            </Stack>
            <Big w={40} icon={<SketchLarge />} text="草绘" />
          </GroupBody>
          <GroupFoot>基准</GroupFoot>
        </Group>
        <Group $w={123}>
          <GroupBody>
            <Big w={46} icon={<ExtrudeLarge />} text="拉伸" />
            <Stack $w={76}>
              <Tool icon={<RevolveI />}>旋转</Tool>
              <Tool icon={<SweepI />} caret>扫描</Tool>
              <Tool icon={<BlendI />}>扫描混合</Tool>
            </Stack>
          </GroupBody>
          <GroupFoot>形状</GroupFoot>
        </Group>
        <Group $w={151}>
          <GroupBody $pad={6}>
            <Stack $w={78}>
              <Tool icon={<HoleI />}>孔</Tool>
              <Tool icon={<RoundI />} caret>倒圆角</Tool>
              <Tool icon={<ChamferI />} caret>倒角</Tool>
            </Stack>
            <Stack $w={66}>
              <Tool icon={<DraftI />} caret>拔模</Tool>
              <Tool icon={<ShellI />}>壳</Tool>
              <Tool icon={<RibI />} caret>筋</Tool>
            </Stack>
          </GroupBody>
          <GroupFoot>工程</GroupFoot>
        </Group>
        <Group $w={215}>
          <GroupBody>
            <Big w={42} mr={4} icon={<PatternLarge />} text="阵列" caret />
            <Stack $w={52}>
              <Tool off icon={<MirrorI />}>镜像</Tool>
              <Tool off icon={<TrimI />}>修剪</Tool>
              <Tool off icon={<MergeI />}>合并</Tool>
            </Stack>
            <Stack $w={52}>
              <Tool off icon={<ExtendI />}>延伸</Tool>
              <Tool off icon={<OffsetI />}>偏移</Tool>
              <Tool off icon={<MergeI />}>相交</Tool>
            </Stack>
            <Stack $w={64}>
              <Tool icon={<ProjectI />}>投影</Tool>
              <Tool off icon={<ThickenI />}>加厚</Tool>
              <Tool off icon={<SolidifyI />}>实体化</Tool>
            </Stack>
          </GroupBody>
          <GroupFoot>编辑</GroupFoot>
        </Group>
        <Group $w={127}>
          <GroupBody>
            <Big w={62} mr={1} icon={<BoundaryLarge />} text="边界混合" />
            <Stack $w={62}>
              <Tool icon={<FillI />}>填充</Tool>
              <Tool icon={<StyleI />}>样式</Tool>
              <Tool icon={<FreeI />}>自由式</Tool>
            </Stack>
          </GroupBody>
          <GroupFoot>曲面</GroupFoot>
        </Group>
        <Group $w={71}>
          <GroupBody>
            <Big w={70} icon={<PuzzleLarge />} text="元件界面" />
          </GroupBody>
          <GroupFoot>模型意图</GroupFoot>
        </Group>
      </Ribbon>
      <Main>
        <Panel>
          <PanelTabs>
            <PanelTab $active $w={75} $pl={11}><ModelTreeI />模型树</PanelTab>
            <PanelTab $w={67} $pl={4}><FolderStack />文...</PanelTab>
            <PanelTab $w={67} $pl={8}><FavFolder />收...</PanelTab>
          </PanelTabs>
          <TreeBar>
            <TreeBarTitle>模型树</TreeBarTitle>
            <TreeTool $mr={8}><HammerI /></TreeTool>
            <TreeTool $mr={9}><Caret /></TreeTool>
            <TreeTool $mr={8}><ListI /></TreeTool>
            <TreeTool $mr={13}><Caret /></TreeTool>
            <TreeTool><TreeDisabled /></TreeTool>
          </TreeBar>
          <Tree>
            <TreeRow $pl={13}><TreeIcon $w={14} $mr={6}><TreeCube /></TreeIcon>PRT0002.PRT</TreeRow>
            <TreeRow $pl={32}><TreeIcon $mr={5}><PlaneSmall /></TreeIcon>RIGHT</TreeRow>
            <TreeRow $pl={32}><TreeIcon $mr={5}><PlaneSmall /></TreeIcon>TOP</TreeRow>
            <TreeRow $pl={32}><TreeIcon $mr={5}><PlaneSmall /></TreeIcon>FRONT</TreeRow>
            <TreeRow $pl={32}><TreeIcon $w={18} $mr={3}><CsysI /></TreeIcon>3D世界网</TreeRow>
            <TreeRow $pl={18}><Expand /><TreeIcon $mr={5}><Cube s="#889" /></TreeIcon>精诚网</TreeRow>
            <TreeRow $pl={18}><Expand /><TreeIcon $mr={5}><Cube s="#889" /></TreeIcon>拉伸 2</TreeRow>
            <TreeRow $pl={32}><TreeIcon $mr={5}><ArrowI /></TreeIcon>在此插入</TreeRow>
          </Tree>
        </Panel>
        <Sash />
        <Canvas>
          <Float>
            <FloatBtn><V.Refit /></FloatBtn>
            <FloatBtn><V.In /></FloatBtn>
            <FloatBtn><V.Out /></FloatBtn>
            <FloatBtn><V.Repaint /></FloatBtn>
            <FloatBtn><V.Display /></FloatBtn>
            <FloatBtn><V.Cube /></FloatBtn>
            <FloatBtn><V.Views /></FloatBtn>
            <FloatBtn><V.Shot /></FloatBtn>
            <FloatBtn><V.Datum /></FloatBtn>
            <FloatBtn $on><V.Hide /></FloatBtn>
            <FloatBtn><V.Tree /></FloatBtn>
          </Float>
          <ModelDrawing />
        </Canvas>
      </Main>
      <Status>
        <StatusBtn $on $mr={5}><ModelTreeI /></StatusBtn>
        <StatusBtn $mr={4}><GlobeI /></StatusBtn>
        <StatusBtn $mr={7}><WinI /></StatusBtn>
        <VSep />
        <Msg><Dot />将不显示旋转中心。</Msg>
        <VSep />
        <VSep $ml={40} />
        <Binocs>
          <BinoIcon><BinoI /></BinoIcon>
          <Caret $ml={4} />
        </Binocs>
        <Combo>
          几何
          <ComboArrow><Caret /></ComboArrow>
        </Combo>
        <Grip width="14" height="14" viewBox="0 0 14 14"><path d="M1 13L13 1M5 13l8-8M9 13l4-4" stroke="#aaa" fill="none" /></Grip>
      </Status>
    </Frame>
  );
}
